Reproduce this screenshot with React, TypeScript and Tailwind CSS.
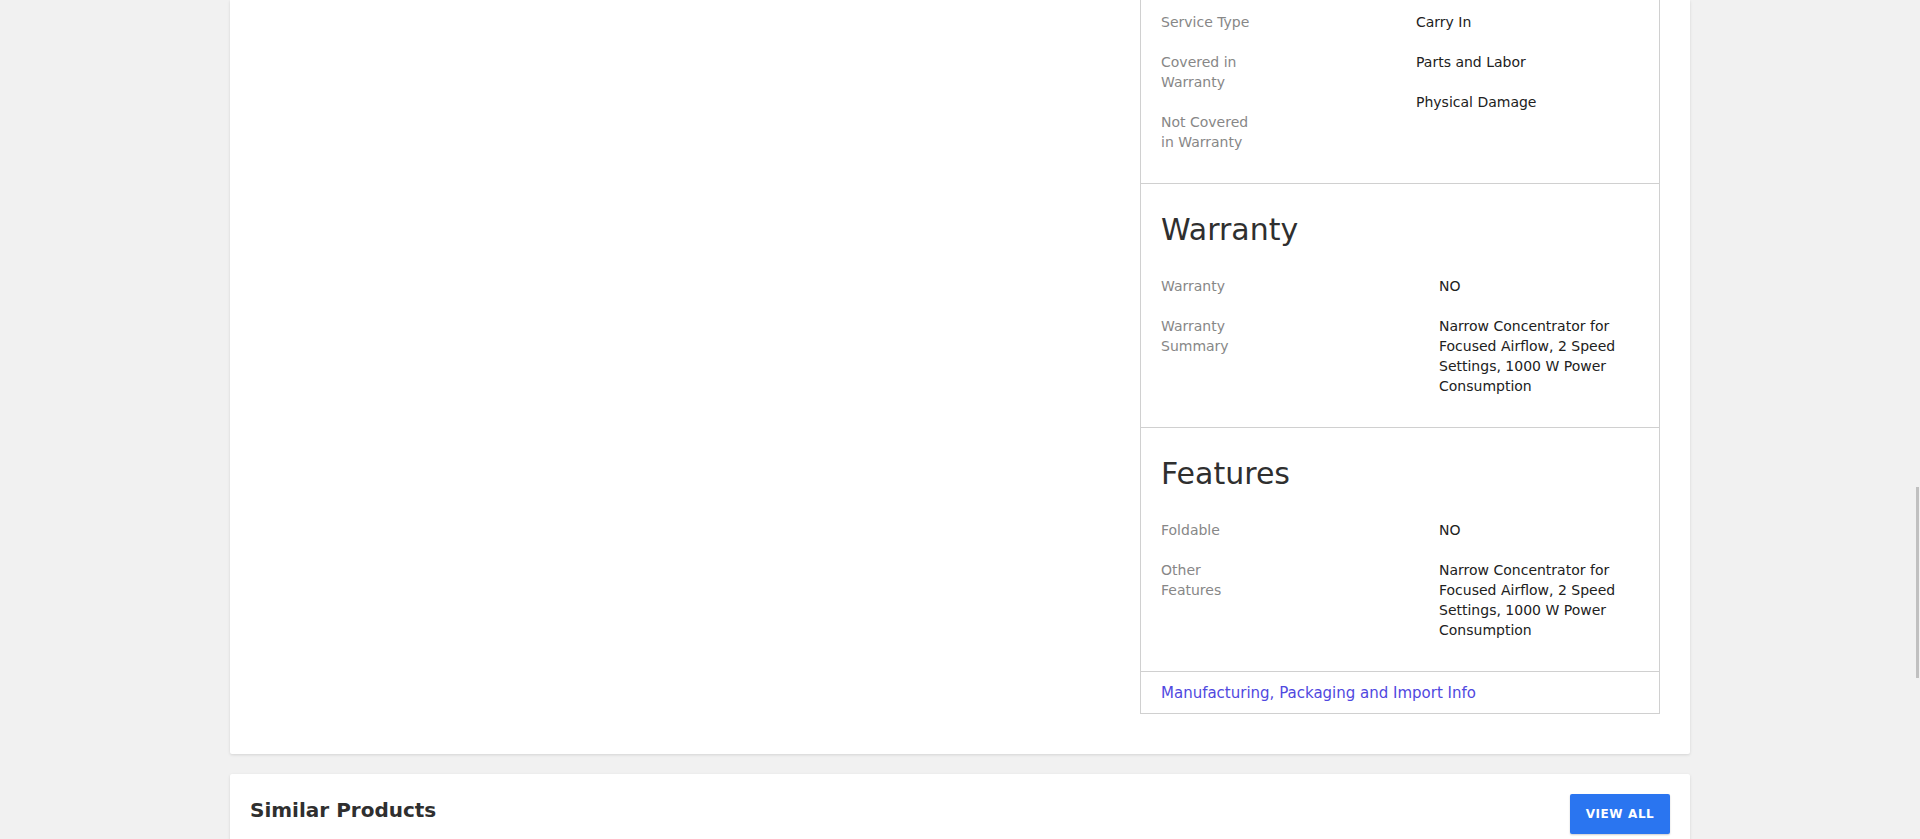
type Spec = { label: string; value: string };

const warranty: Spec[] = [
  { label: "Warranty", value: "NO" },
  {
    label: "Warranty Summary",
    value: "Narrow Concentrator for Focused Airflow, 2 Speed Settings, 1000 W Power Consumption",
  },
];

const features: Spec[] = [
  { label: "Foldable", value: "NO" },
  {
    label: "Other Features",
    value: "Narrow Concentrator for Focused Airflow, 2 Speed Settings, 1000 W Power Consumption",
  },
];

function SpecSection({ title, rows }: { title: string; rows: Spec[] }) {
  return (
    <div className="border-b border-[#d0d0d0] px-5 pt-[28px] pb-[31px]">
      <h2 className="text-[30px] leading-[36px] text-[#2f2f2f] mb-[28px]">{title}</h2>
      <div className="flex flex-col gap-5">
        {rows.map((r) => (
          <div key={r.label} className="flex text-sm leading-5">
            <div className="w-[278px] shrink-0">
              <p className="max-w-[98px] text-[#878787]">{r.label}</p>
            </div>
            <p className="flex-1 text-[#212121]">{r.value}</p>
          </div>
        ))}
      </div>
    </div>
  );
}

export default function App() {
  return (
    <div className="h-[839px] overflow-hidden bg-[#f1f1f1] font-['DejaVu_Sans',sans-serif]">
      <div className="mx-auto w-[1460px]">
        {/* product details card, scrolled so that only its lower part shows */}
        <div className="flex bg-white pb-10 rounded-b-[2px] shadow-[0_1px_3px_0_rgba(0,0,0,0.12)]">
          <div className="flex-1" />
          <div className="w-[520px] mr-[30px] border-x border-b-0 border-[#d0d0d0]">
            <div className="flex border-b border-[#d0d0d0] px-5 pt-3 pb-[31px] text-sm leading-5">
              <div className="w-[255px] shrink-0 flex flex-col gap-5 text-[#878787]">
                <p className="max-w-[98px]">Service Type</p>
                <p className="max-w-[98px]">Covered in Warranty</p>
                <p className="max-w-[98px]">Not Covered in Warranty</p>
              </div>
              <div className="flex flex-col gap-5 text-[#212121]">
                <p>Carry In</p>
                <p>Parts and Labor</p>
                <p>Physical Damage</p>
              </div>
            </div>
            <SpecSection title="Warranty" rows={warranty} />
            <SpecSection title="Features" rows={features} />
            <div className="border-b border-[#d0d0d0] px-5 pt-[11px] pb-[10px] leading-5">
              <a className="text-[15px] leading-5 text-[#5048e0] cursor-pointer">
                Manufacturing, Packaging and Import Info
              </a>
            </div>
          </div>
        </div>

        {/* similar products */}
        <div className="mt-5 h-[300px] bg-white rounded-[2px] shadow-[0_1px_3px_0_rgba(0,0,0,0.12)] flex items-start justify-between px-5 pt-5">
          <h3 className="mt-[2px] text-xl leading-7 font-bold text-[#2f2f2f]">Similar Products</h3>
          <button className="w-[100px] h-10 rounded-[2px] bg-[#2a75f0] text-white text-xs font-bold tracking-[0.6px] shadow-[0_1px_2px_0_rgba(0,0,0,0.2)]">
            VIEW ALL
          </button>
        </div>
      </div>

      {/* overlay scrollbar thumb */}
      <div className="fixed right-[1px] top-[487px] h-[191px] w-[3px] bg-[#c0c0c0]" />
    </div>
  );
}
